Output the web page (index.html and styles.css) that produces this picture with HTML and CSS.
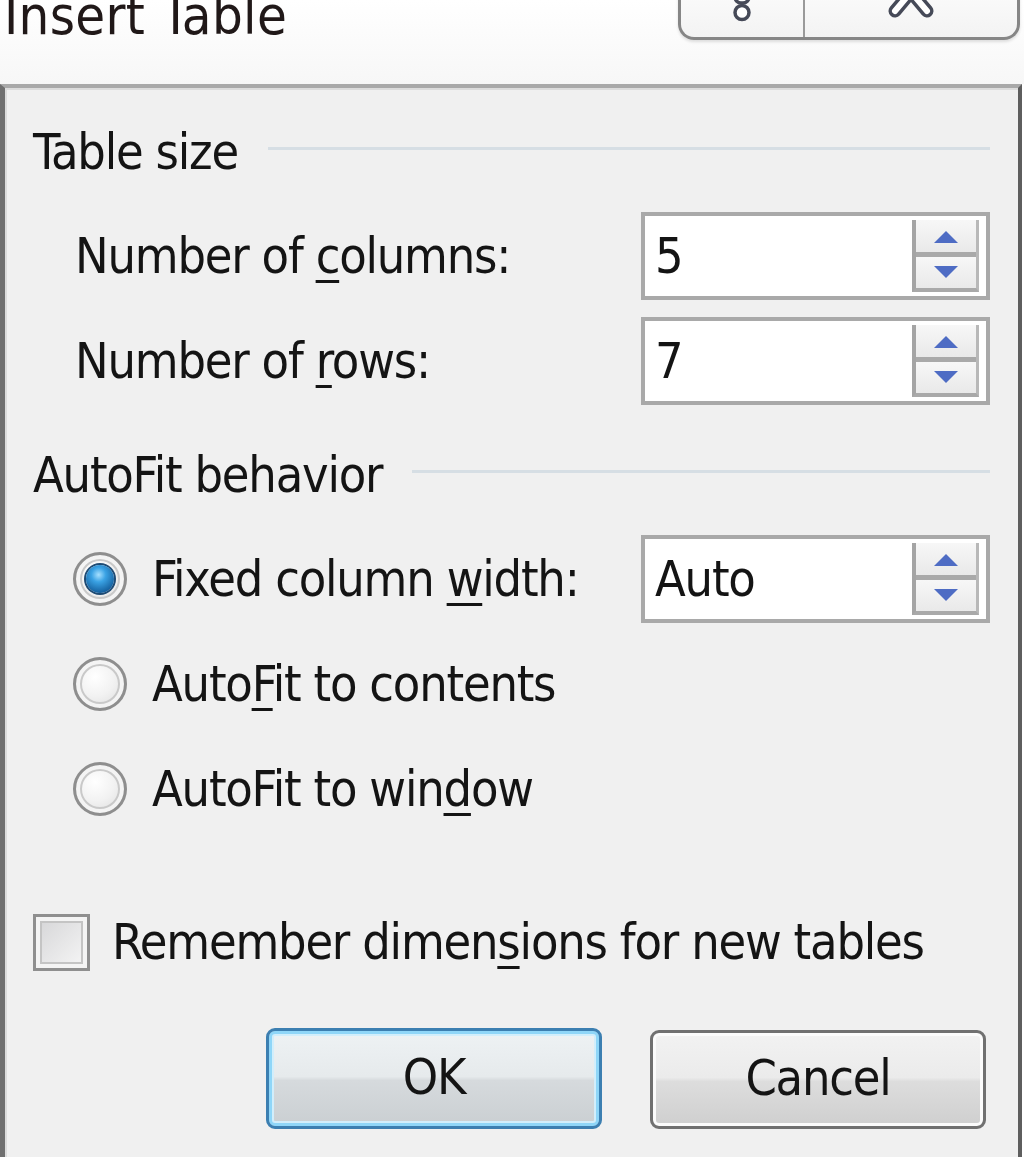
FILE: index.html
```html
<!DOCTYPE html>
<html lang="en">

<head>
  <meta charset="UTF-8">
  <meta name="viewport" content="width=device-width, initial-scale=1.0">
  <title>Insert Table</title>
  <link rel="stylesheet" href="styles.css">
</head>

<body>
  <div class="window">
    <header class="caption">
      <span class="caption-title">Insert Table</span>
      <div class="caption-buttons">
        <span class="cap-btn help">
          <svg width="40" height="28" viewBox="0 0 40 28">
            <rect x="13" y="-10" width="14" height="18" rx="6" fill="#fff" stroke="#464a58" stroke-width="3.5" />
            <circle cx="20" cy="17.5" r="7" fill="#fff" stroke="#464a58" stroke-width="3.5" />
          </svg>
        </span>
        <span class="cap-btn close">
          <svg width="60" height="28" viewBox="0 0 60 28">
            <path d="M14 -22 L46 16 M46 -22 L14 16" stroke="#464a58" stroke-width="13" stroke-linecap="round" />
            <path d="M14 -22 L46 16 M46 -22 L14 16" stroke="#fff" stroke-width="6" stroke-linecap="round" />
          </svg>
        </span>
      </div>
    </header>

    <div class="dialog">
      <div class="group-head">
        <span>Table size</span>
        <i class="rule"></i>
      </div>

      <div class="field-row first">
        <label class="field-label">Number of <u>c</u>olumns:</label>
        <div class="spin">
          <span class="spin-value">5</span>
          <div class="spin-btns"><b class="up"></b><b class="down"></b></div>
        </div>
      </div>

      <div class="field-row">
        <label class="field-label">Number of <u>r</u>ows:</label>
        <div class="spin">
          <span class="spin-value">7</span>
          <div class="spin-btns"><b class="up"></b><b class="down"></b></div>
        </div>
      </div>

      <div class="group-head second">
        <span>AutoFit behavior</span>
        <i class="rule"></i>
      </div>

      <div class="field-row radio-row first">
        <label class="radio-label"><span class="radio checked"></span><span>Fixed column <u>w</u>idth:</span></label>
        <div class="spin">
          <span class="spin-value">Auto</span>
          <div class="spin-btns"><b class="up"></b><b class="down"></b></div>
        </div>
      </div>

      <div class="field-row radio-row">
        <label class="radio-label"><span class="radio"></span><span>Auto<u>F</u>it to contents</span></label>
      </div>

      <div class="field-row radio-row">
        <label class="radio-label"><span class="radio"></span><span>AutoFit to win<u>d</u>ow</span></label>
      </div>

      <div class="check-row">
        <span class="checkbox"></span>
        <label>Remember dimen<u>s</u>ions for new tables</label>
      </div>

      <div class="buttons">
        <button class="btn default">OK</button>
        <button class="btn">Cancel</button>
      </div>
    </div>
  </div>
</body>

</html>
```

FILE: styles.css
```css
body {
  margin: 0;
  background: #fff;
  font-family: "DejaVu Sans Condensed", "DejaVu Sans", sans-serif;
  font-stretch: condensed;
  font-size: 50px;
  letter-spacing: -1.2px;
  color: #141414;
  overflow: hidden;
}

.window {
  width: 1024px;
  height: 1157px;
}

/* title strip */
.caption {
  height: 84px;
  display: flex;
  justify-content: space-between;
  align-items: flex-start;
  background: linear-gradient(#ffffff, #f7f7f7);
}

.caption-title {
  margin-left: 4px;
  margin-top: -14px;
  font-size: 54px;
  letter-spacing: 0.3px;
  line-height: 60px;
  color: #201818;
}

.caption-buttons {
  display: flex;
  margin-top: -20px;
  margin-right: 4px;
  height: 57px;
  border: 3px solid #868686;
  border-top: none;
  border-radius: 0 0 16px 16px;
  background: linear-gradient(#fdfdfd, #f3f3f3);
  box-shadow: 0 2px 3px rgba(0, 0, 0, 0.12);
  overflow: hidden;
}

.cap-btn {
  display: flex;
  justify-content: center;
  align-items: flex-start;
  box-sizing: border-box;
  height: 57px;
}

.cap-btn svg {
  margin-top: 15px;
}

.cap-btn.help {
  width: 124px;
  border-right: 2px solid #9a9a9a;
}

.cap-btn.close {
  width: 212px;
}

/* dialog body */
.dialog {
  width: 1022px;
  height: 1073px;
  box-sizing: border-box;
  background: #f0f0f0;
  border-left: 5px solid #707070;
  border-top: 4px solid #a9a9a9;
  border-right: 4px solid #5e5e5e;
  padding: 34px 28px 0 28px;
  box-shadow: inset 2px 2px 0 #dcdcdc;
}

.group-head {
  display: flex;
  align-items: flex-start;
  height: 60px;
  line-height: 60px;
}

.group-head.second {
  margin-top: 40px;
}

.group-head .rule {
  flex: 1;
  height: 3px;
  margin: 25px 0 0 30px;
  background: #d6dee4;
}

.field-row {
  display: flex;
  align-items: center;
  justify-content: space-between;
  height: 88px;
  margin-top: 17px;
  line-height: 60px;
}

.field-row.first {
  margin-top: 30px;
}

.field-label {
  margin-left: 42px;
}

u {
  text-decoration-thickness: 3px;
  text-underline-offset: 7px;
}

/* spin box */
.spin {
  width: 349px;
  height: 88px;
  box-sizing: border-box;
  display: flex;
  align-items: center;
  justify-content: space-between;
  background: #fff;
  border: 4px solid #a9a9a9;
  padding: 4px 7px 4px 10px;
}

.spin-btns {
  width: 67px;
  height: 72px;
  box-sizing: border-box;
  display: flex;
  flex-direction: column;
  border-left: 4px solid #a4a4a4;
  border-right: 3px solid #b8b8b8;
  border-bottom: 4px solid #a9a9a9;
}

.spin-btns b {
  flex: 1;
  display: flex;
  align-items: center;
  justify-content: center;
  background: linear-gradient(#f7f7f7, #e9e9e9);
}

.spin-btns b.up {
  border-bottom: 5px solid #a9a9a9;
}

.spin-btns b::after {
  content: '';
  width: 0;
  height: 0;
  border-left: 12px solid transparent;
  border-right: 12px solid transparent;
}

.spin-btns b.up::after {
  border-bottom: 12px solid #4e6cc4;
  margin-top: 2px;
}

.spin-btns b.down::after {
  border-top: 12px solid #4e6cc4;
}

/* radios */
.radio-label {
  display: flex;
  align-items: center;
  margin-left: 40px;
}

.radio {
  width: 54px;
  height: 54px;
  box-sizing: border-box;
  margin-right: 25px;
  border-radius: 50%;
  border: 3px solid #8e8e8e;
  background: radial-gradient(circle at 40% 35%, #ffffff 0%, #f2f2f2 45%, #d8d8d8 100%);
  box-shadow: inset 0 0 0 4px #f4f4f4, inset 0 0 0 6px #c9c9c9;
  display: flex;
  align-items: center;
  justify-content: center;
}

.radio.checked::after {
  content: '';
  width: 28px;
  height: 28px;
  border-radius: 50%;
  background: radial-gradient(circle at 45% 35%, #a6e0ff 0%, #3aa2e4 30%, #15609e 75%, #0d3e6b 100%);
  box-shadow: 0 0 0 2px #1e4b74;
}

/* checkbox */
.check-row {
  display: flex;
  align-items: center;
  height: 60px;
  margin-top: 79px;
  line-height: 60px;
}

.checkbox {
  width: 57px;
  height: 57px;
  box-sizing: border-box;
  margin-right: 22px;
  border: 3px solid #8f8f8f;
  background: linear-gradient(135deg, #d4d4d6, #f7f7f7);
  box-shadow: inset 0 0 0 4px #f4f4f4, inset 0 0 0 6px #c4c4c4;
}

/* buttons */
.buttons {
  display: flex;
  justify-content: flex-end;
  gap: 48px;
  margin-top: 58px;
  padding-right: 4px;
}

.btn {
  width: 336px;
  height: 99px;
  box-sizing: border-box;
  font: inherit;
  letter-spacing: inherit;
  color: #141414;
  border: 3px solid #707070;
  border-radius: 9px;
  background: linear-gradient(#f2f2f2 0%, #ebebeb 48%, #dddddd 52%, #cfcfcf 100%);
  box-shadow: inset 0 0 0 3px #fbfbfb;
  padding: 0 0 4px;
}

.btn.default {
  height: 101px;
  margin-top: -2px;
  border-color: #3c7fb1;
  box-shadow: inset 0 0 0 3px #8fd6f8, inset 0 0 0 5px #d2eefb;
  background: linear-gradient(#eef2f4 0%, #e6eaec 48%, #d6dadd 52%, #cacfd2 100%);
}
```
